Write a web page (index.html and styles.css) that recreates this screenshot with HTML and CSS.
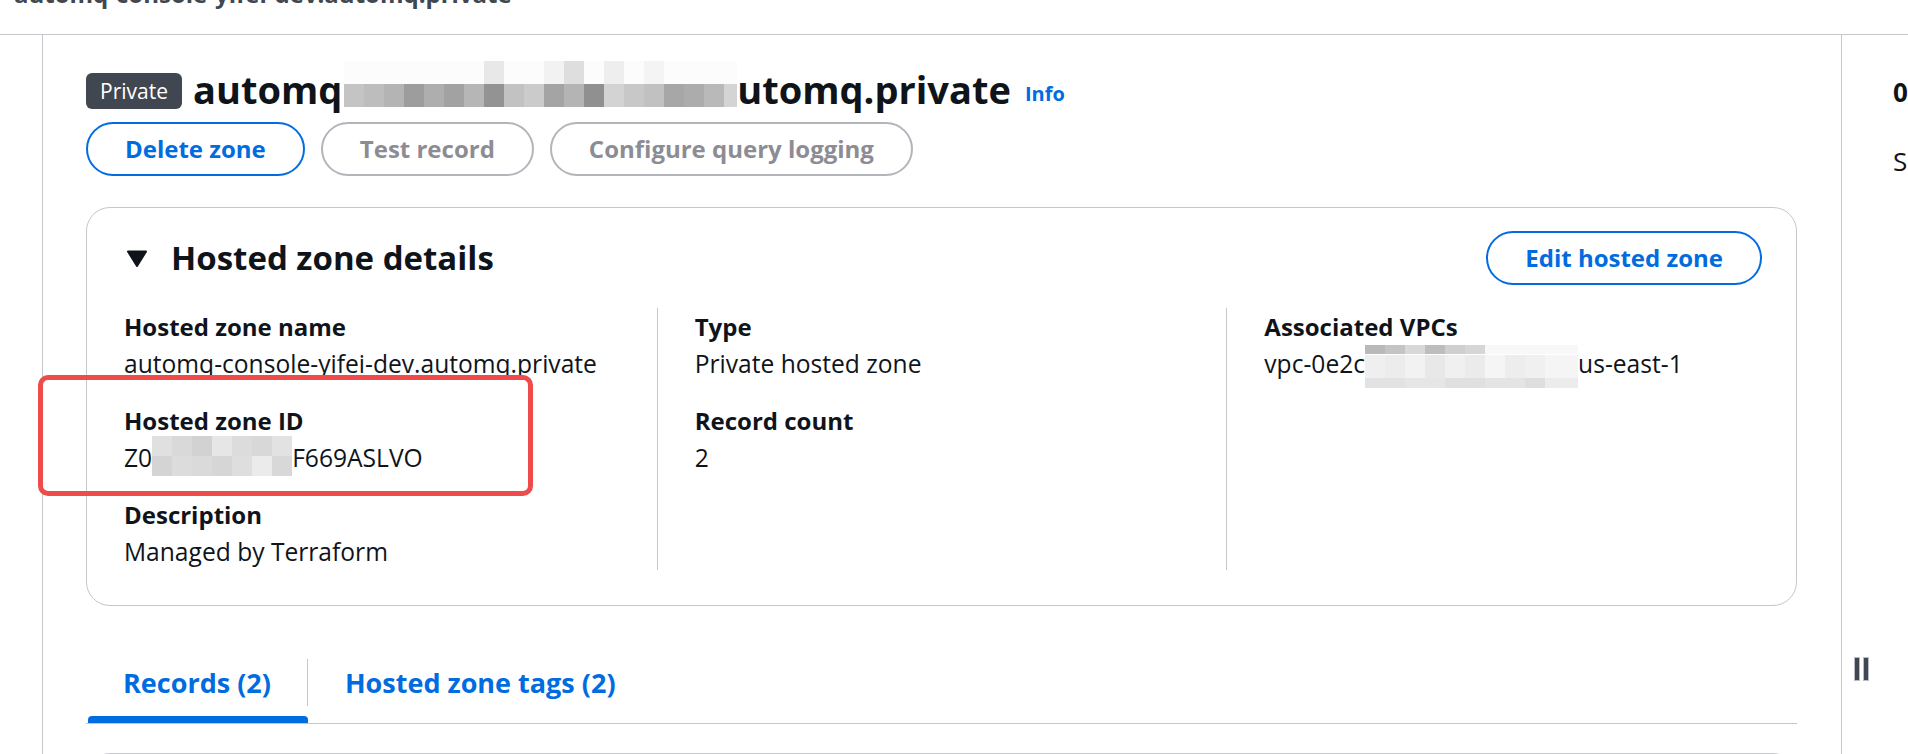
FILE: index.html
```html
<!DOCTYPE html>
<html lang="en">
  <head>
    <meta charset="UTF-8" />
    <title>automq-console-yifei-dev.automq.private</title>
    <link rel="stylesheet" href="styles.css">
  </head>

  <body>
    <div class="topbar">
      <div class="topbar-title">automq-console-yifei-dev.automq.private</div>
    </div>

    <div class="layout">
      <div class="gutter"></div>

      <main class="content">
        <!-- page header -->
        <div class="page-head">
          <span class="badge">Private</span>
          <h1>automq<span class="mosaic mosaic-title"></span>utomq.private</h1>
          <a class="info" href="#">Info</a>
        </div>

        <div class="actions">
          <button class="btn">Delete zone</button>
          <button class="btn btn-disabled">Test record</button>
          <button class="btn btn-disabled">Configure query logging</button>
        </div>

        <!-- hosted zone details -->
        <section class="card">
          <div class="card-head">
            <div class="card-title">
              <svg class="caret" width="20" height="17" viewBox="0 0 20 17">
                <path d="M1 1.5h18L10 16z" fill="#0f141a" stroke="#0f141a" stroke-width="2" stroke-linejoin="round" />
              </svg>
              <h2>Hosted zone details</h2>
            </div>
            <button class="btn">Edit hosted zone</button>
          </div>

          <div class="cols">
            <div class="col">
              <div class="kv">
                <div class="kv-label">Hosted zone name</div>
                <div class="kv-value">automq-console-yifei-dev.automq.private</div>
              </div>
              <div class="kv">
                <div class="kv-label">Hosted zone ID</div>
                <div class="kv-value">Z0<span class="mosaic mosaic-id"></span>F669ASLVO</div>
              </div>
              <div class="kv">
                <div class="kv-label">Description</div>
                <div class="kv-value">Managed by Terraform</div>
              </div>
            </div>
            <div class="col">
              <div class="kv">
                <div class="kv-label">Type</div>
                <div class="kv-value">Private hosted zone</div>
              </div>
              <div class="kv">
                <div class="kv-label">Record count</div>
                <div class="kv-value">2</div>
              </div>
            </div>
            <div class="col">
              <div class="kv">
                <div class="kv-label">Associated VPCs</div>
                <div class="kv-value">vpc-0e2c<span class="mosaic mosaic-vpc"></span>us-east-1</div>
              </div>
            </div>
          </div>
        </section>

        <!-- tabs -->
        <div class="tabs">
          <div class="tab active">
            <div class="tab-label">Records (2)</div>
            <div class="tab-bar"></div>
          </div>
          <div class="tab">
            <div class="tab-label">Hosted zone tags (2)</div>
            <div class="tab-bar"></div>
          </div>
        </div>

        <section class="card card-next"></section>
      </main>

      <aside class="side">
        <div class="side-title">0</div>
        <div class="side-sub">S</div>
        <div class="handle"><i></i><i></i></div>
      </aside>
    </div>

    <div class="annotation"></div>
  </body>
</html>
```

FILE: styles.css
```css
html,
body {
  margin: 0;
  height: 100%;
  overflow: hidden;
}

body {
  position: relative;
  background: #fff;
  color: #0f141a;
  font-family: "Open Sans", "Noto Sans", sans-serif;
  font-size: 24px;
}

.topbar {
  height: 34px;
  border-bottom: 1px solid #c6c6cd;
  overflow: hidden;
}

.topbar-title {
  margin: -23px 0 0 14px;
  font-weight: 700;
  line-height: 34px;
  color: #414750;
  white-space: nowrap;
}

.layout {
  display: flex;
  height: calc(100% - 35px);
}

.gutter {
  flex: none;
  width: 42px;
  border-right: 1px solid #c6c6cd;
}

.content {
  flex: none;
  box-sizing: border-box;
  width: 1799px;
  padding: 36px 44px 0 43px;
  border-right: 1px solid #c6c6cd;
}

/* header */
.page-head {
  display: flex;
  align-items: center;
  height: 40px;
}

.badge {
  padding: 0 14px;
  margin-right: 11px;
  border-radius: 6px;
  background: #414750;
  color: #fff;
  font-size: 21px;
  line-height: 36px;
}

h1 {
  margin: 0 0 5px;
  font-size: 38px;
  line-height: 40px;
  font-weight: 700;
  white-space: nowrap;
}

.info {
  margin: 4px 0 0 14px;
  color: #006ce0;
  font-size: 20px;
  font-weight: 700;
  text-decoration: none;
}

.actions {
  display: flex;
  gap: 16px;
  margin-top: 11px;
}

.btn {
  padding: 0 37px;
  border: 2px solid #006ce0;
  border-radius: 27px;
  background: #fff;
  color: #006ce0;
  font-family: inherit;
  font-size: 24px;
  font-weight: 700;
  line-height: 50px;
}

.btn-disabled {
  border-color: #b4b4bb;
  color: #8c8c94;
}

/* blurred bits */
.mosaic {
  display: inline-block;
  vertical-align: top;
}

.mosaic-title {
  width: 393px;
  height: 46px;
  margin: -8px 0 0 2px;
  background:
    linear-gradient(to right,
      #fcfcfc 0 140px, #e8e8e8 140px 160px, #fcfcfc 160px 200px,
      #f2f2f2 200px 220px, #dedede 220px 240px, #fcfcfc 240px 260px,
      #eeeeee 260px 280px, #fcfcfc 280px 300px, #f4f4f4 300px 320px,
      #fcfcfc 320px 393px) top / 100% 50% no-repeat,
    linear-gradient(to right,
      #c4c4c4 0 20px, #bdbdbd 20px 40px, #b4b4b4 40px 60px, #9d9d9d 60px 80px,
      #aeaeae 80px 100px, #a2a2a2 100px 120px, #b6b6b6 120px 140px, #939393 140px 160px,
      #c2c2c2 160px 180px, #cbcbcb 180px 200px, #a4a4a4 200px 220px, #b4b4b4 220px 240px,
      #909090 240px 260px, #d3d3d3 260px 280px, #c8c8c8 280px 300px, #c1c1c1 300px 320px,
      #a7a7a7 320px 340px, #acacac 340px 360px, #b9b9b9 360px 380px, #d4d4d4 380px 393px) bottom / 100% 50% no-repeat;
}

.mosaic-id {
  width: 140px;
  height: 40px;
  margin-top: -3px;
  background:
    linear-gradient(to right,
      #e0e0e0 0 20px, #d9d9d9 20px 40px, #d2d2d2 40px 60px, #e6e6e6 60px 80px,
      #dcdcdc 80px 100px, #d8d8d8 100px 120px, #e2e2e2 120px 140px) top / 100% 50% no-repeat,
    linear-gradient(to right,
      #d4d4d4 0 20px, #dcdcdc 20px 40px, #dadada 40px 60px, #d6d6d6 60px 80px,
      #dedede 80px 100px, #ebebeb 100px 120px, #d8d8d8 120px 140px) bottom / 100% 50% no-repeat;
}

.mosaic-vpc {
  width: 213px;
  height: 43px;
  margin-bottom: -6px;
  background:
    linear-gradient(to right,
      #b9b9b9 0 20px, #c4c4c4 20px 40px, #d8d8d8 40px 60px, #bdbdbd 60px 80px,
      #cfcfcf 80px 100px, #d6d6d6 100px 120px, #f8f8f8 120px 213px) top / 100% 9px no-repeat,
    linear-gradient(to right,
      #efefef 0 20px, #ececec 20px 40px, #f2f2f2 40px 60px, #e8e8e8 60px 80px,
      #f0f0f0 80px 100px, #ebebeb 100px 120px, #f5f5f5 120px 140px, #ededed 140px 160px,
      #f0f0f0 160px 180px, #f5f5f5 180px 213px) center / 100% 23px no-repeat,
    linear-gradient(to right,
      #e2e2e2 0 40px, #e6e6e6 40px 80px, #e0e0e0 80px 120px, #e4e4e4 120px 160px,
      #dedede 160px 180px, #ececec 180px 213px) bottom / 100% 11px no-repeat;
}

/* cards */
.card {
  margin-top: 31px;
  padding: 23px 0 35px;
  border: 1px solid #c6c6cd;
  border-radius: 24px;
}

.card-head {
  display: flex;
  align-items: center;
  justify-content: space-between;
  padding: 0 34px 0 40px;
}

.card-title {
  display: flex;
  align-items: center;
}

.caret {
  margin-right: 24px;
}

h2 {
  margin: 0;
  font-size: 33px;
  line-height: 40px;
  font-weight: 700;
}

.cols {
  display: grid;
  grid-template-columns: repeat(3, 1fr);
  margin-top: 23px;
}

.col {
  padding: 0 37px;
}

.col + .col {
  border-left: 1px solid #c6c6cd;
}

.kv + .kv {
  margin-top: 20px;
}

.kv-label {
  font-weight: 700;
  line-height: 37px;
}

.kv-value {
  font-size: 24.6px;
  line-height: 37px;
  white-space: nowrap;
}

/* tabs */
.tabs {
  display: flex;
  margin-top: 53px;
  padding-left: 2px;
  border-bottom: 1px solid #c6c6cd;
}

.tab {
  display: flex;
  flex-direction: column;
}

.tab-label {
  margin-bottom: 10px;
  padding: 0 36px 0 35px;
  color: #006ce0;
  font-size: 27px;
  font-weight: 700;
  line-height: 47px;
}

.tab:first-child .tab-label {
  border-right: 1px solid #c6c6cd;
}

.tab + .tab .tab-label {
  padding-left: 37px;
}

.tab-bar {
  height: 7px;
  border-radius: 4px 4px 0 0;
}

.tab.active .tab-bar {
  background: #006ce0;
}

.card-next {
  height: 200px;
  margin-top: 29px;
  padding: 0;
}

/* right panel */
.side {
  flex: 1;
  overflow: hidden;
  white-space: nowrap;
}

.side-title {
  margin: 37px 0 0 51px;
  font-size: 26px;
  font-weight: 700;
  line-height: 40px;
}

.side-sub {
  margin: 29px 0 0 51px;
  font-size: 26px;
  line-height: 40px;
}

.handle {
  display: flex;
  gap: 5px;
  margin: 477px 0 0 13px;
}

.handle i {
  width: 4px;
  height: 22px;
  background: #414750;
  box-shadow: 0 0 0 1px #b8bcc6;
}

/* red highlight drawn on the screenshot */
.annotation {
  position: absolute;
  left: 38px;
  top: 375px;
  width: 485px;
  height: 111px;
  border: 5px solid #f04b4b;
  border-radius: 10px;
}
```
